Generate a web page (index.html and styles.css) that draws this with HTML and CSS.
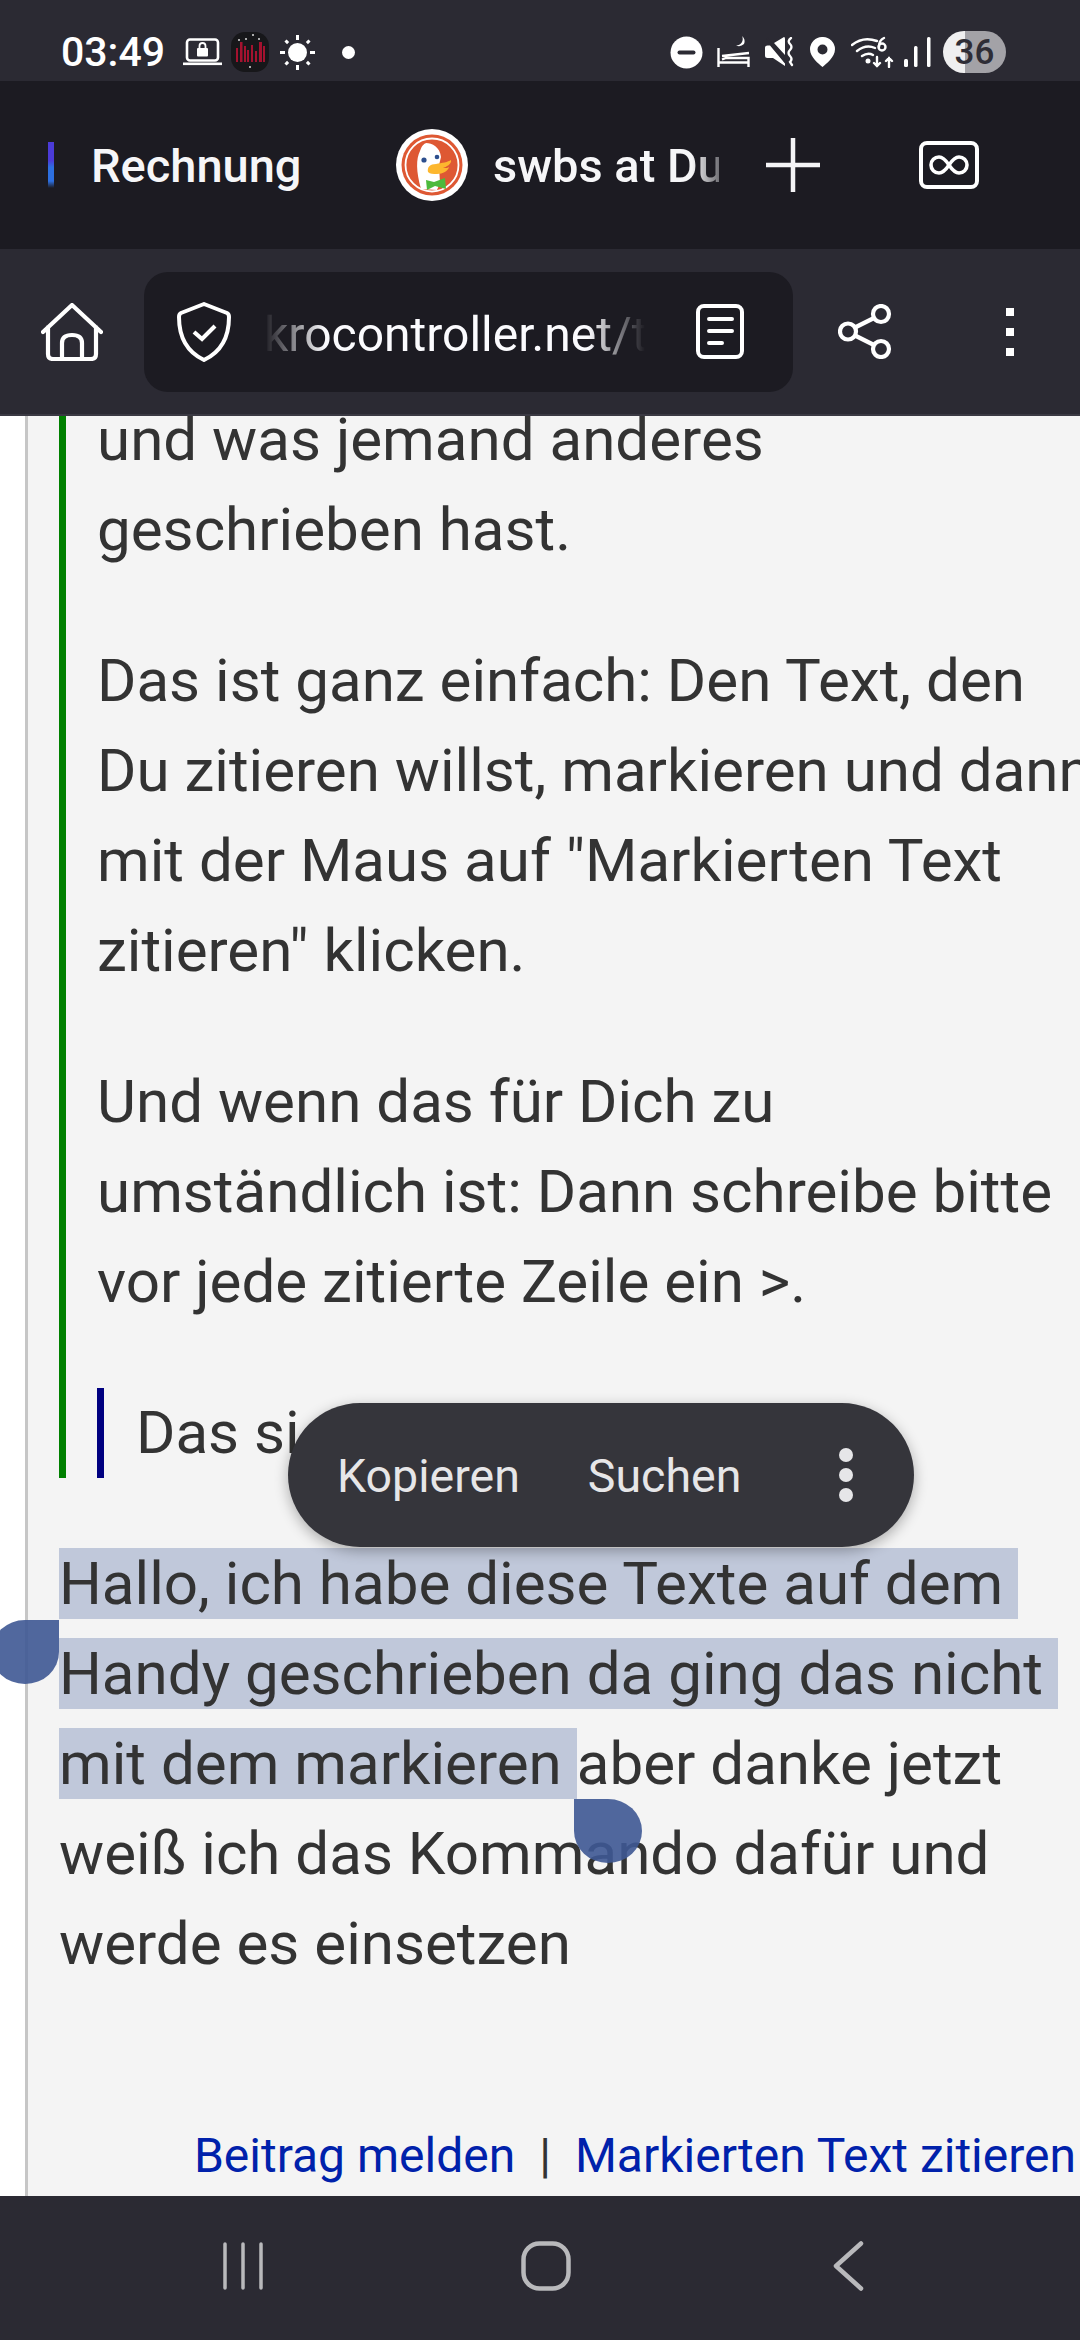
FILE: index.html
```html
<!DOCTYPE html>
<html lang="de">
<head>
<meta charset="utf-8">
<title>Rechnung</title>
<link rel="stylesheet" href="styles.css">
</head>
<body>
<div class="page">
  <header class="status">
    <span class="clock">03:49</span>
    <svg class="i-laptop" width="39" height="28" viewBox="0 0 39 28"><rect x="4" y="1.5" width="31" height="21" rx="3" fill="none" stroke="#fff" stroke-width="2.6"/><rect x="0" y="24.5" width="39" height="2.6" fill="#fff"/><rect x="14" y="10" width="11" height="8.5" rx="1" fill="#fff"/><path d="M16.5 10V8a3 3 0 0 1 6 0v2" fill="none" stroke="#fff" stroke-width="1.8"/></svg>
    <svg class="i-app" width="38" height="40" viewBox="0 0 38 40"><rect width="38" height="40" rx="14" fill="#17171a"/><g fill="#a4122f"><rect x="5" y="16" width="2" height="14"/><rect x="9" y="10" width="2.5" height="20"/><rect x="13" y="14" width="2" height="16"/><rect x="16" y="18" width="2" height="12"/><rect x="20" y="13" width="2" height="17"/><rect x="24" y="19" width="2" height="11"/><rect x="28" y="10" width="3" height="20"/><rect x="32" y="14" width="2" height="16"/></g><g fill="#ddd"><circle cx="8" cy="8" r="1"/><circle cx="15" cy="7" r="1"/><circle cx="22" cy="3" r="1"/><circle cx="28" cy="7" r="1"/><circle cx="19" cy="35" r="1"/></g></svg>
    <svg class="i-sun" width="35" height="35" viewBox="0 0 35 35"><circle cx="17.5" cy="17.5" r="9.5" fill="#fff"/><g stroke="#fff" stroke-width="3"><path d="M17.5 0v5M17.5 30v5M0 17.5h5M30 17.5h5M5.5 5.5l2.6 2.6M26.9 26.9l2.6 2.6M5.5 29.5l2.6-2.6M26.9 8.1l2.6-2.6"/></g></svg>
    <span class="notif-dot"></span>
    <span class="grow"></span>
    <svg class="i-dnd" width="33" height="33" viewBox="0 0 33 33"><circle cx="16.5" cy="16.5" r="16" fill="#fff"/><rect x="7.5" y="14.5" width="18" height="4" rx="2" fill="#2b2a33"/></svg>
    <svg class="i-bed" width="33" height="32" viewBox="0 0 33 32"><path d="M1.5 12v19M1.5 26.5h30M31.5 31v-9H9l-4 1.500M5 20l27-3" fill="none" stroke="#fff" stroke-width="2.4"/><path d="M25 0a6.500 6.500 0 0 1-6 9.500 7.500 7.500 0 0 0 8-1.500 7 7 0 0 0-2-8z" fill="#fff"/></svg>
    <svg class="i-mute" width="30" height="30" viewBox="0 0 30 30"><path d="M0 10.500Q0 8.500 2.500 8.500H5l15 18v2.500L8 21H2.500Q0 21 0 18.500zM9 6l10-6q1 0 1 2v16z" fill="#fff"/><path d="M2 1l20 26" stroke="#2b2a33" stroke-width="2"/><path d="M26 1q-4 3-1 6t0 6q-3 3 0 6t0 6l2 3" fill="none" stroke="#fff" stroke-width="2.300" stroke-linecap="round"/></svg>
    <svg class="i-pin" width="25" height="30" viewBox="0 0 25 30"><path fill-rule="evenodd" d="M12.500 0A12.200 12.200 0 0 1 25 12.200C25 20 16 27 12.500 30 9 27 0 20 0 12.200A12.200 12.200 0 0 1 12.500 0zm0 7.500a5 5 0 1 0 0 10 5 5 0 0 0 0-10z" fill="#fff"/></svg>
    <svg class="i-wifi" width="44" height="32" viewBox="0 0 44 32"><g fill="none" stroke="#fff" stroke-width="2.400" stroke-linecap="round"><path d="M1 9q11-9 25-4M6 15q9-7 18-3M11 20q6-4 11-1"/><path d="M26 21v9M23 27l3 3 3-3M38 31v-9M35 25l3-3 3 3"/><circle cx="31" cy="11" r="3.500"/><path d="M28 11q0-7 5-9"/></g><circle cx="17" cy="25" r="2.500" fill="#fff"/></svg>
    <svg class="i-signal" width="28" height="30" viewBox="0 0 28 30"><g fill="#fff"><rect x="1" y="22" width="4" height="8" rx="1.500"/><rect x="11" y="9" width="3.500" height="21" rx="1.500"/><rect x="24" y="0" width="3.500" height="30" rx="1.500"/></g></svg>
    <div class="battery"><span class="battery-num">36</span></div>
  </header>

  <nav class="tabs">
    <span class="sliver"></span>
    <span class="tab-title tab-first">Rechnung</span>
    <svg class="duck" width="72" height="72" viewBox="0 0 72 72">
      <circle cx="36" cy="36" r="36" fill="#fff"/>
      <circle cx="36" cy="36" r="30.500" fill="#de5833"/>
      <circle cx="36" cy="36" r="26.500" fill="none" stroke="#fff" stroke-width="1.800"/>
      <path d="M25 60C20 42 20 30 24 22c2-6 4-7 6-8 6 0 14 4 15 14l-2 8 1 18-3 7z" fill="#fff"/>
      <path d="M32 43c-1-5 2-8 8-8 6-1 12-2 15-4 1 4-5 7-8 8 3 0 5 0 6-1-1 4-6 7-12 7-4 0-7 0-9-2z" fill="#fdb72e"/>
      <path d="M30 51l8 2 11-4 1 11-11-3-8 4z" fill="#4cba3c"/>
      <circle cx="28" cy="31" r="2.600" fill="#2d4f8e"/><circle cx="41" cy="28" r="2.300" fill="#2d4f8e"/>
    </svg>
    <span class="tab-title fade-tab">swbs at Duck</span>
    <svg class="i-plus" width="54" height="54" viewBox="0 0 54 54"><path d="M27 0v54M0 27h54" stroke="#f4f4f6" stroke-width="4.500"/></svg>
    <svg class="i-private" width="60" height="48" viewBox="0 0 60 48"><rect x="2" y="2" width="56" height="44" rx="6" fill="none" stroke="#fff" stroke-width="4"/><path d="M30 24c-4-6-7-8-10-8a8 8 0 0 0 0 16c3 0 6-2 10-8s7-8 10-8a8 8 0 0 1 0 16c-3 0-6-2-10-8z" fill="none" stroke="#fff" stroke-width="3.600"/></svg>
  </nav>

  <nav class="toolbar">
    <svg class="i-home" width="62" height="58" viewBox="0 0 62 58"><path d="M2 29 31 2l29 27M7 24v27q0 5 5 5h38q5 0 5-5V24M21 56V40q0-8 10-8t10 8v16" fill="none" stroke="#fff" stroke-width="4.200" stroke-linejoin="round" stroke-linecap="round"/></svg>
    <div class="urlbar">
      <svg class="i-shield" width="54" height="60" viewBox="0 0 54 60"><path d="M27 2l23 9q2 1 2 4c0 20-8 35-25 43C10 50 2 35 2 15q0-3 2-4z" fill="none" stroke="#fff" stroke-width="4" stroke-linejoin="round"/><path d="M17 30l8 7 13-13" fill="none" stroke="#fff" stroke-width="4.200"/></svg>
      <span class="url">krocontroller.net/t</span>
      <svg class="i-reader" width="48" height="55" viewBox="0 0 48 55"><rect x="2" y="2" width="44" height="51" rx="6" fill="none" stroke="#fff" stroke-width="4"/><path d="M13 15h23M13 27h23M13 39h13" stroke="#fff" stroke-width="4" stroke-linecap="round"/></svg>
    </div>
    <svg class="i-share" width="54" height="55" viewBox="0 0 54 55"><g fill="none" stroke="#fff" stroke-width="4.200"><circle cx="43" cy="10" r="8"/><circle cx="43" cy="45" r="8"/><circle cx="10" cy="27.500" r="8"/><path d="M17 23.500 36 14M17 31.500 36 41"/></g></svg>
    <div class="kebab"><span></span><span></span><span></span></div>
  </nav>

  <main class="content">
    <article class="post">
      <blockquote class="quote">
        <p>und was jemand anderes<br>geschrieben hast.</p>
        <p>Das ist ganz einfach: Den Text, den<br>Du zitieren willst, markieren und dann<br>mit der Maus auf "Markierten Text<br>zitieren" klicken.</p>
        <p>Und wenn das für Dich zu<br>umständlich ist: Dann schreibe bitte<br>vor jede zitierte Zeile ein &gt;.</p>
        <blockquote class="quote-inner"><p>Das si</p></blockquote>
      </blockquote>
      <p class="message"><span class="sel">Hallo, ich habe diese Texte auf dem </span><br><span class="sel">Handy geschrieben da ging das nicht </span><br><span class="sel">mit dem markieren </span>aber danke jetzt<br>weiß ich das Kommando dafür und<br>werde es einsetzen</p>
      <div class="links"><a>Beitrag melden</a><span class="sep">|</span><a>Markierten Text zitieren</a></div>
    </article>
    <span class="handle handle-left"></span>
    <span class="handle handle-right"></span>
    <div class="popup">
      <span class="popup-item">Kopieren</span>
      <span class="popup-item">Suchen</span>
      <span class="popup-more"><i></i><i></i><i></i></span>
    </div>
  </main>

  <footer class="navbar">
    <svg width="40" height="48" viewBox="0 0 40 48"><path d="M2 2v44M20 2v44M38 2v44" stroke="#b9b9bc" stroke-width="3.500" stroke-linecap="round"/></svg>
    <svg width="50" height="50" viewBox="0 0 50 50"><rect x="2.500" y="2.500" width="45" height="45" rx="16" fill="none" stroke="#b9b9bc" stroke-width="4.500"/></svg>
    <svg class="nav-back" width="31" height="50" viewBox="0 0 31 50"><path d="M28 2.500 3 25l25 22.500" fill="none" stroke="#b9b9bc" stroke-width="4.500" stroke-linecap="round" stroke-linejoin="round"/></svg>
  </footer>
</div>
</body>
</html>
```
FILE: styles.css
```css
* { box-sizing: border-box; }
html, body { margin: 0; padding: 0; }
body { font-family: Roboto, "Liberation Sans", sans-serif; background: #fff; }
svg { display: block; flex: none; }
.page { width: 1080px; height: 2340px; display: flex; flex-direction: column; overflow: hidden; }

.status { height: 81px; background: #2b2a33; display: flex; align-items: center; padding: 23px 74px 0 61px; color: #fff; flex: none; }
.clock { font-size: 41px; font-weight: 500; width: 122px; }
.i-app { margin-left: 9px; }
.i-sun { margin-left: 11px; }
.notif-dot { width: 13px; height: 13px; border-radius: 50%; background: #fff; margin-left: 27px; }
.grow { flex: 1; }
.i-bed { margin-left: 14px; }
.i-mute { margin-left: 15px; }
.i-pin { margin-left: 15px; }
.i-wifi { margin-left: 16px; }
.i-signal { margin-left: 8px; }
.battery { width: 63px; height: 42px; border-radius: 21px; margin-left: 12px; display: flex; align-items: center; justify-content: center; background: linear-gradient(90deg, #efeff0 35%, #a3a2a7 35%); }
.battery-num { color: #2e2d36; font-size: 35px; font-weight: 500; }

.tabs { height: 168px; background: #1c1b22; display: flex; align-items: center; flex: none; padding-left: 48px; }
.sliver { width: 6px; height: 46px; background: linear-gradient(180deg, #4b3bd8 0 40%, #2d6fe0 55% 85%, transparent); }
.tab-title { color: #f6f6f8; font-size: 47px; font-weight: 500; white-space: nowrap; }
.tab-first { margin-left: 37px; width: 305px; }
.duck { margin-right: 25px; }
.fade-tab { width: 226px; overflow: hidden; -webkit-mask-image: linear-gradient(90deg, #000 88%, rgba(0,0,0,.4)); mask-image: linear-gradient(90deg, #000 88%, rgba(0,0,0,.4)); }
.i-plus { margin-left: 47px; }
.i-private { margin-left: 99px; }

.toolbar { height: 167px; background: #2b2a33; border-bottom: 2px solid #3a3943; display: flex; align-items: center; padding-left: 41px; flex: none; }
.urlbar { width: 649px; height: 120px; margin-left: 41px; background: #1c1b22; border-radius: 24px; display: flex; align-items: center; padding-left: 33px; }
.url { width: 381px; margin-left: 33px; padding-top: 6px; color: #fbfbfe; font-size: 48px; white-space: nowrap; overflow: hidden; -webkit-mask-image: linear-gradient(90deg, transparent 0, #000 16%, #000 85%, transparent 100%); mask-image: linear-gradient(90deg, transparent 0, #000 16%, #000 85%, transparent 100%); }
.i-reader { margin-left: 51px; }
.i-share { margin-left: 45px; }
.kebab { margin-left: 114px; display: flex; flex-direction: column; gap: 12px; }
.kebab span { width: 8px; height: 8px; background: #fff; display: block; }

.content { flex: 1; min-height: 0; position: relative; overflow: hidden; background: #fff; color: #333; font-size: 60.1px; line-height: 90px; white-space: nowrap; }
.post { margin-left: 25px; height: 100%; border-left: 3px solid #c6c6c6; background: #f4f4f4; padding-left: 31px; display: flex; flex-direction: column; }
.post p { margin: 0; }
.quote { margin: -21px 0 0; border-left: 7px solid #008000; padding-left: 31px; }
.post .quote p { margin-bottom: 61px; }
.quote-inner { margin: 0 0 0 0; border-left: 7px solid #000080; padding-left: 32px; }
.post .quote .quote-inner p { margin-bottom: 0; }
.post .message { margin-top: 61px; }
.sel { background: #c0c8da; white-space: pre; }
.links { margin-top: auto; padding: 0 4px 10px 0; display: flex; justify-content: flex-end; font-size: 48px; line-height: 60px; }
.links a { color: #0021ab; }
.sep { margin: 0 24px; }

.handle { position: absolute; width: 68px; height: 64px; background: rgba(62, 88, 148, .9); }
.handle-left { left: -9px; top: 1204px; border-radius: 50% 0 50% 50%; }
.handle-right { left: 574px; top: 1383px; border-radius: 0 50% 50% 50%; }
.popup { position: absolute; left: 288px; top: 987px; width: 626px; height: 144px; border-radius: 72px; background: #35353b; box-shadow: 0 4px 14px rgba(0,0,0,.3); display: flex; align-items: center; padding: 2px 0 0 49px; color: #e6e6e8; font-size: 46.500px; line-height: 50px; }
.popup-item { margin-right: 68px; }
.popup-more { display: flex; flex-direction: column; gap: 6px; margin-left: 30px; margin-top: -2px; }
.popup-more i { width: 14px; height: 14px; border-radius: 50%; background: #e6e6e8; display: block; }

.navbar { height: 144px; background: #2b2a33; display: flex; align-items: center; padding: 0 0 4px 223px; flex: none; gap: 258px; }
.nav-back { margin-left: 4px; }
```
